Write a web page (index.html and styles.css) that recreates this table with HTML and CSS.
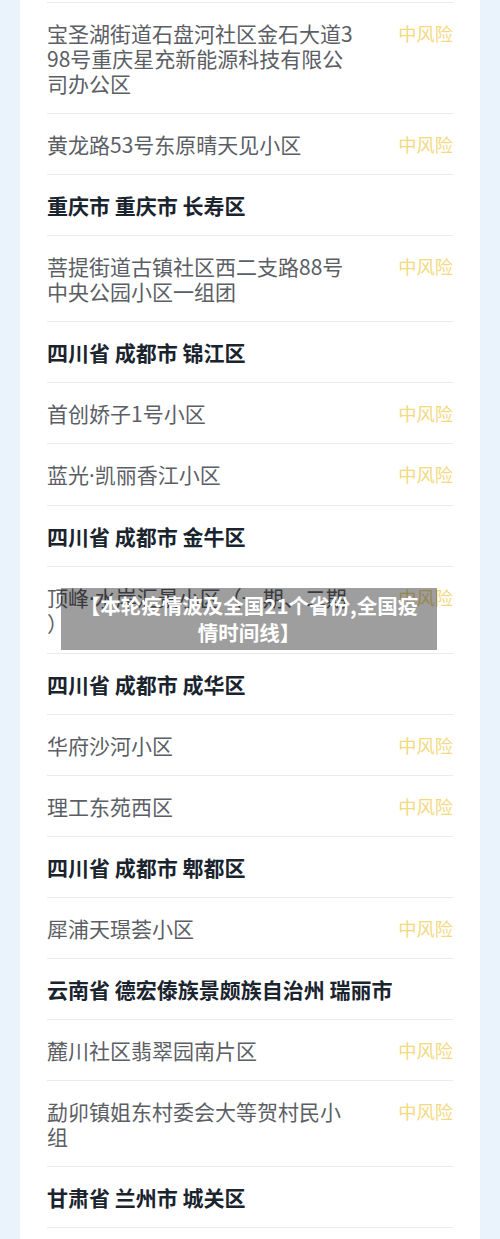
FILE: index.html
```html
<!DOCTYPE html>
<html lang="zh-CN">
<head>
    <meta charset="UTF-8">
    <meta name="viewport" content="width=device-width, initial-scale=1.0">
    <title>中风险地区</title>
    <link rel="stylesheet" href="styles.css">
</head>
<body>

    <div class="card">
        <div class="row">
            <span class="place">宝圣湖街道石盘河社区金石大道398号重庆星充新能源科技有限公司办公区</span>
            <span class="risk">中风险</span>
        </div>
        <div class="row">
            <span class="place">黄龙路53号东原晴天见小区</span>
            <span class="risk">中风险</span>
        </div>
        <div class="row head">重庆市 重庆市 长寿区</div>
        <div class="row">
            <span class="place">菩提街道古镇社区西二支路88号中央公园小区一组团</span>
            <span class="risk">中风险</span>
        </div>
        <div class="row head">四川省 成都市 锦江区</div>
        <div class="row">
            <span class="place">首创娇子1号小区</span>
            <span class="risk">中风险</span>
        </div>
        <div class="row">
            <span class="place">蓝光<span class="dot">·</span>凯丽香江小区</span>
            <span class="risk">中风险</span>
        </div>
        <div class="row head">四川省 成都市 金牛区</div>
        <div class="row">
            <span class="place">顶峰<span class="dot">·</span>水岸汇景小区（一期、二期<br>）</span>
            <span class="risk">中风险</span>
        </div>
        <div class="row head">四川省 成都市 成华区</div>
        <div class="row">
            <span class="place">华府沙河小区</span>
            <span class="risk">中风险</span>
        </div>
        <div class="row">
            <span class="place">理工东苑西区</span>
            <span class="risk">中风险</span>
        </div>
        <div class="row head">四川省 成都市 郫都区</div>
        <div class="row">
            <span class="place">犀浦天璟荟小区</span>
            <span class="risk">中风险</span>
        </div>
        <div class="row head">云南省 德宏傣族景颇族自治州 瑞丽市</div>
        <div class="row">
            <span class="place">麓川社区翡翠园南片区</span>
            <span class="risk">中风险</span>
        </div>
        <div class="row">
            <span class="place">勐卯镇姐东村委会大等贺村民小组</span>
            <span class="risk">中风险</span>
        </div>
        <div class="row head">甘肃省 兰州市 城关区</div>
    </div>

    <div class="caption">【本轮疫情波及全国21个省份,全国疫情时间线】</div>

</body>
</html>
```

FILE: styles.css
```css
body {
    font-family: "Noto Sans CJK SC", "Noto Sans", sans-serif;
    background: #eaf3fc;
    margin: 0;
    padding: 0 20px;
    position: relative;
}
.card {
    background: #ffffff;
    padding: 2px 27px 13px;
}
.row {
    display: flex;
    justify-content: space-between;
    align-items: flex-start;
    border-top: 1px solid #ebebeb;
    padding: 17.5px 0;
    font-size: 21px;
    line-height: 25px;
}
.row:last-child {
    border-bottom: 1px solid #ebebeb;
}
.place {
    color: #5b5e65;
    max-width: 312px;
    word-break: break-all;
}
.dot {
    font-family: "Noto Sans", sans-serif;
}
.risk {
    color: #f4d97f;
    font-size: 18.3px;
}
.head {
    color: #1a242e;
    font-weight: bold;
}
.caption {
    position: absolute;
    top: 588px;
    left: 61px;
    width: 376px;
    box-sizing: border-box;
    padding: 4px 12px;
    background: rgba(0, 0, 0, 0.38);
    color: #ffffff;
    font-size: 20.5px;
    font-weight: bold;
    line-height: 27px;
    text-align: center;
}
```
